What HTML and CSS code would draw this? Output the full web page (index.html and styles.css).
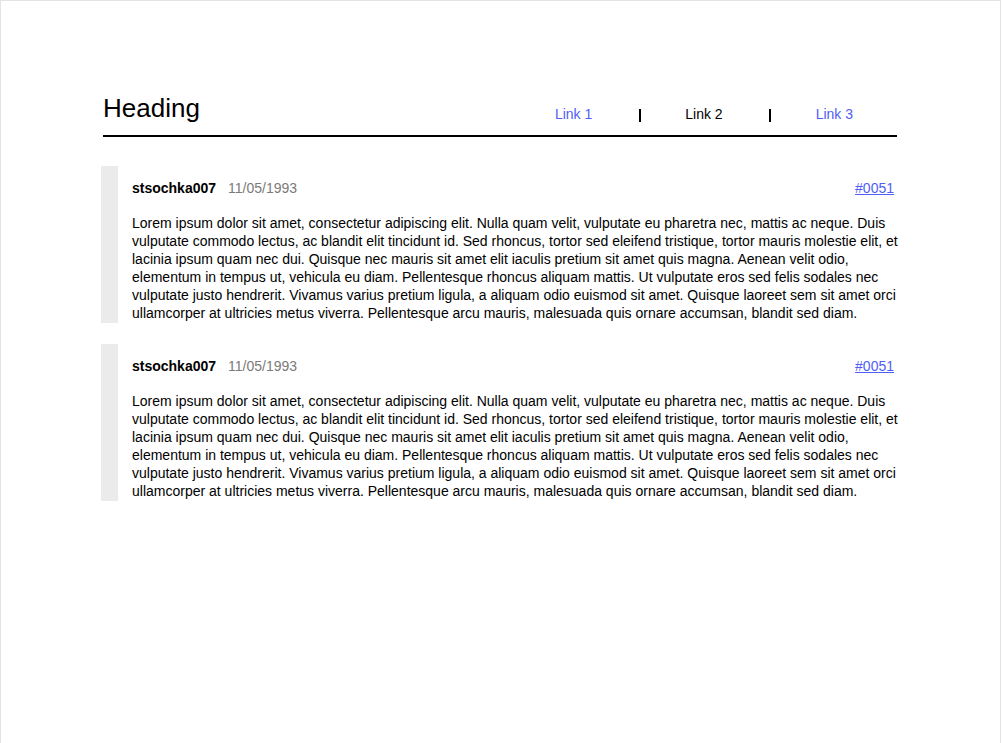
FILE: index.html
```html
<!DOCTYPE html>
<html>
<head>
<meta charset="utf-8">
<link rel="stylesheet" href="styles.css">
</head>
<body>
<div class="page">
  <div class="container">
    <header class="header">
      <h1 class="title">Heading</h1>
      <nav class="nav">
        <a class="nav-link first" href="#">Link 1</a>
        <span class="sep"></span>
        <span class="nav-link current">Link 2</span>
        <span class="sep"></span>
        <a class="nav-link last" href="#">Link 3</a>
      </nav>
    </header>

    <article class="post">
      <div class="post-head">
        <span class="user">stsochka007</span>
        <span class="date">11/05/1993</span>
        <a class="num" href="#">#0051</a>
      </div>
      <p class="post-body">Lorem ipsum dolor sit amet, consectetur adipiscing elit. Nulla quam velit, vulputate eu pharetra nec, mattis ac neque. Duis vulputate commodo lectus, ac blandit elit tincidunt id. Sed rhoncus, tortor sed eleifend tristique, tortor mauris molestie elit, et lacinia ipsum quam nec dui. Quisque nec mauris sit amet elit iaculis pretium sit amet quis magna. Aenean velit odio, elementum in tempus ut, vehicula eu diam. Pellentesque rhoncus aliquam mattis. Ut vulputate eros sed felis sodales nec vulputate justo hendrerit. Vivamus varius pretium ligula, a aliquam odio euismod sit amet. Quisque laoreet sem sit amet orci ullamcorper at ultricies metus viverra. Pellentesque arcu mauris, malesuada quis ornare accumsan, blandit sed diam.</p>
    </article>

    <article class="post">
      <div class="post-head">
        <span class="user">stsochka007</span>
        <span class="date">11/05/1993</span>
        <a class="num" href="#">#0051</a>
      </div>
      <p class="post-body">Lorem ipsum dolor sit amet, consectetur adipiscing elit. Nulla quam velit, vulputate eu pharetra nec, mattis ac neque. Duis vulputate commodo lectus, ac blandit elit tincidunt id. Sed rhoncus, tortor sed eleifend tristique, tortor mauris molestie elit, et lacinia ipsum quam nec dui. Quisque nec mauris sit amet elit iaculis pretium sit amet quis magna. Aenean velit odio, elementum in tempus ut, vehicula eu diam. Pellentesque rhoncus aliquam mattis. Ut vulputate eros sed felis sodales nec vulputate justo hendrerit. Vivamus varius pretium ligula, a aliquam odio euismod sit amet. Quisque laoreet sem sit amet orci ullamcorper at ultricies metus viverra. Pellentesque arcu mauris, malesuada quis ornare accumsan, blandit sed diam.</p>
    </article>
  </div>
</div>
</body>
</html>
```

FILE: styles.css
```css
* { box-sizing: border-box; }

html, body {
  margin: 0;
  padding: 0;
  background: #ffffff;
}

body {
  font-family: "Liberation Sans", Arial, sans-serif;
  color: #000;
  overflow: hidden;
}

.page {
  width: 1001px;
  min-height: 800px;
  border: 1px solid #e3e3e3;
  border-bottom: none;
  padding-top: 92px;
}

.container {
  width: 794px;
  margin: 0 0 0 102px;
}

.header {
  display: flex;
  justify-content: space-between;
  align-items: flex-end;
  border-bottom: 2px solid #000;
  padding-bottom: 12px;
}

.title {
  margin: 0;
  font-size: 26px;
  font-weight: normal;
  line-height: 30px;
}

.nav {
  display: flex;
  align-items: center;
  font-size: 14px;
  line-height: 16px;
  margin-bottom: 1px;
}

.nav-link {
  color: #4f5ef5;
  text-decoration: none;
}

.nav-link.first {
  padding: 0 47px 0 0;
}

.nav-link.current {
  color: #000;
  padding: 0 46px 0 44px;
}

.nav-link.last {
  padding: 0 44px 0 45px;
}

.sep {
  width: 2px;
  height: 13px;
  background: #000;
  margin-top: 2px;
}

.post {
  margin: 29px -2px 0 -2px;
  border-left: 17px solid #ebebeb;
  padding: 13px 0 1px 14px;
}

.post + .post {
  margin-top: 21px;
}

.post-head {
  display: flex;
  align-items: baseline;
  font-size: 14px;
  line-height: 18px;
}

.user {
  font-weight: bold;
}

.date {
  color: #7a7a7a;
  margin-left: 12px;
}

.num {
  margin-left: auto;
  margin-right: 5px;
  color: #4f5ef5;
  text-decoration: underline;
}

.post-body {
  margin: 17px 0 0 0;
  font-size: 14px;
  line-height: 18px;
}
```
